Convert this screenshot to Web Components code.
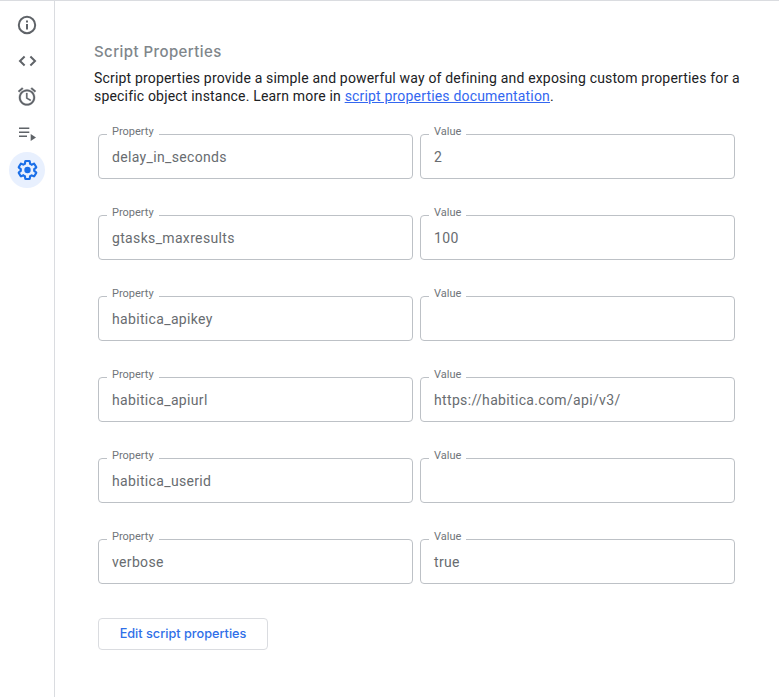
<!DOCTYPE html>
<html>
<head>
<meta charset="utf-8">
<title>Script Properties</title>
<style>
html, body { margin: 0; height: 100%; background: #fff; }
body { font-family: Roboto, "Liberation Sans", sans-serif; }
</style>
</head>
<body>
<gas-shell>
  <gas-rail slot="rail"></gas-rail>
  <h-settings>
    <prop-row name="delay_in_seconds" value="2"></prop-row>
    <prop-row name="gtasks_maxresults" value="100"></prop-row>
    <prop-row name="habitica_apikey" value=""></prop-row>
    <prop-row name="habitica_apiurl" value="https://habitica.com/api/v3/"></prop-row>
    <prop-row name="habitica_userid" value=""></prop-row>
    <prop-row name="verbose" value="true"></prop-row>
  </h-settings>
</gas-shell>

<script>
class GasShell extends HTMLElement {
  constructor() {
    super();
    this.attachShadow({ mode: "open" });
    this.shadowRoot.innerHTML = `
      <style>
        :host { display: flex; height: 697px; box-sizing: border-box; border-top: 1px solid #dadce0; overflow: hidden; }
      </style>
      <slot name="rail"></slot>
      <slot></slot>`;
  }
}

const railIcons = [
  `<circle cx="12" cy="12" r="8.200" fill="none" stroke="#5f6368" stroke-width="2"/><rect x="11" y="11" width="2" height="5.500" fill="#5f6368"/><rect x="11" y="7.500" width="2" height="2" fill="#5f6368"/>`,
  `<path d="M9.600 7.500 5 12l4.600 4.500M15.400 7.500 20 12l-4.600 4.500" fill="none" stroke="#5f6368" stroke-width="2"/>`,
  `<path d="M22 5.720l-4.600-3.860-1.290 1.530 4.600 3.860L22 5.720zM7.880 3.390 6.600 1.860 2 5.710l1.290 1.530 4.590-3.850zM12.500 8H11v6l4.750 2.850.75-1.230-4-2.370V8zM12 4c-4.970 0-9 4.030-9 9s4.030 9 9 9 9-4.030 9-9-4.030-9-9-9zm0 16c-3.870 0-7-3.130-7-7s3.130-7 7-7 7 3.130 7 7-3.130 7-7 7z" fill="#5f6368" stroke="#5f6368" stroke-width=".3" transform="translate(1.200 .800) scale(.9)"/>`,
  `<path d="M4 6.500h10.300V8H4zM4 10.500h10.300V12H4zM4 14.500h8V16H4zM15.700 13v7l5.300-3.500z" fill="#5f6368"/>`,
  `<path d="M19.430 12.980c.04-.32.07-.64.07-.98s-.03-.66-.07-.98l2.110-1.650c.19-.15.24-.42.12-.64l-2-3.460c-.12-.22-.39-.3-.61-.22l-2.490 1c-.52-.4-1.080-.73-1.690-.98l-.38-2.650C14.460 2.180 14.250 2 14 2h-4c-.25 0-.46.18-.49.420l-.38 2.650c-.61.25-1.170.59-1.690.98l-2.490-1c-.23-.09-.49 0-.61.220l-2 3.460c-.13.220-.07.490.12.640l2.110 1.650c-.04.32-.07.650-.07.980s.03.660.07.980l-2.110 1.650c-.19.150-.24.420-.12.640l2 3.460c.12.220.39.300.61.220l2.490-1c.52.400 1.080.730 1.690.980l.38 2.650c.03.240.24.420.49.420h4c.25 0 .46-.18.49-.42l.38-2.650c.61-.25 1.170-.59 1.690-.98l2.490 1c.23.090.49 0 .61-.22l2-3.460c.12-.22.070-.49-.12-.64l-2.110-1.650z" fill="none" stroke="#1a6fe8" stroke-width="2.400" transform="translate(1.700 1.200) scale(.9)"/><circle cx="12.500" cy="12" r="3.200" fill="#1a6fe8"/>`
];

class GasRail extends HTMLElement {
  constructor() {
    super();
    this.attachShadow({ mode: "open" });
    const items = railIcons.map((d, i) => `
      <div class="item ${i == 4 ? "active" : ""}">
        <svg width="24" height="24" viewBox="0 0 24 24">${d}</svg>
      </div>`).join("");
    this.shadowRoot.innerHTML = `
      <style>
        :host { display: flex; flex-direction: column; align-items: center; box-sizing: border-box; width: 55px; flex: none; padding-top: 6px; border-right: 1px solid #dadce0; }
        .item { width: 36px; height: 36px; display: flex; align-items: center; justify-content: center; border-radius: 50%; }
        .active { background: #e8f0fe; margin-top: 1px; }
      </style>
      ${items}`;
  }
}

class HSettings extends HTMLElement {
  constructor() {
    super();
    this.attachShadow({ mode: "open" });
    this.shadowRoot.innerHTML = `
      <style>
        :host { display: block; flex: 1; padding: 42px 39px 0 39px; color: #202124; }
        h2 { margin: 0; font: 500 15px/18px Inter, Roboto, sans-serif; color: #80868b; letter-spacing: .42px; }
        p { margin: 8px 0 0; font: 400 14px/18px Roboto, sans-serif; letter-spacing: .18px; }
        a { color: #3367f0; text-decoration: underline; }
        .rows { display: flex; flex-direction: column; gap: 36px; margin: 29px 4px 0; }
        button { display: block; margin: 34px 0 0 4px; width: 170px; height: 32px; box-sizing: border-box; background: #fff; border: 1px solid #dadce0; border-radius: 4px; color: #2f6fe8; font: 500 12.700px Inter, Roboto, sans-serif; padding: 0 0 1px; }
      </style>
      <h2>Script Properties</h2>
      <p>Script properties provide a simple and powerful way of defining and exposing custom properties for a specific object instance. Learn more in <a href="#">script properties documentation</a>.</p>
      <div class="rows"><slot></slot></div>
      <button>Edit script properties</button>`;
  }
}

class PropRow extends HTMLElement {
  constructor() {
    super();
    this.attachShadow({ mode: "open" });
    this.shadowRoot.innerHTML = `
      <style>
        :host { display: flex; gap: 7px; }
      </style>
      <out-field label="Property" text="${this.getAttribute("name")}"></out-field>
      <out-field label="Value" text="${this.getAttribute("value")}"></out-field>`;
  }
}

class OutField extends HTMLElement {
  constructor() {
    super();
    this.attachShadow({ mode: "open" });
    this.shadowRoot.innerHTML = `
      <style>
        :host { display: block; position: relative; width: 315px; height: 45px; box-sizing: border-box; border: 1px solid #bdc1c6; border-radius: 4px; padding: 0 13px; font: 400 14px/44px Roboto, sans-serif; color: #686c70; letter-spacing: .34px; }
        label { position: absolute; left: 8px; top: -10px; padding: 0 5px; background: linear-gradient(#fff0 8px, #fff 8px); font: 400 11px/13px Roboto, sans-serif; color: #70757a; letter-spacing: 0; }
      </style>
      <label>${this.getAttribute("label")}</label>
      <div>${this.getAttribute("text")}</div>`;
  }
}

customElements.define("gas-shell", GasShell);
customElements.define("gas-rail", GasRail);
customElements.define("h-settings", HSettings);
customElements.define("prop-row", PropRow);
customElements.define("out-field", OutField);
</script>
</body>
</html>
